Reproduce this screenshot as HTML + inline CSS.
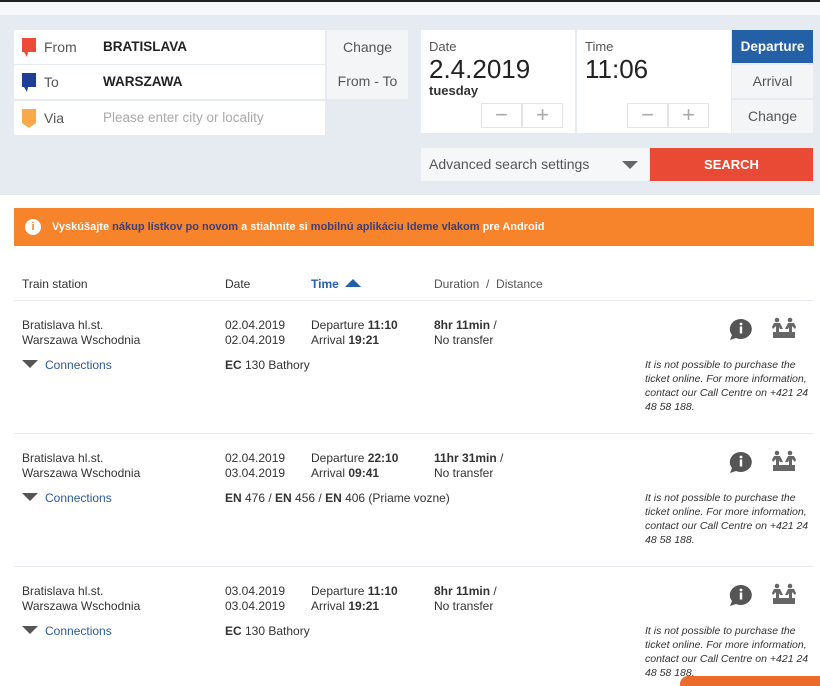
<!DOCTYPE html>
<html><head><meta charset="utf-8"><style>
*{margin:0;padding:0;box-sizing:border-box}
body{width:820px;height:682px;overflow:hidden;background:#fff;font-family:"Liberation Sans",sans-serif;color:#333;position:relative}
.a{position:absolute}
.top{left:0;top:0;width:820px;height:2px;background:#222}
.strip{left:0;top:2px;width:820px;height:13px;background:#f6f7f9}
.bg{left:0;top:15px;width:820px;height:180px;background:#e6ebf2}
.inp{background:#fff;left:14px;width:311px;height:34px;font-size:14px}
.inp .l{position:absolute;left:30px;top:9px;color:#555}
.inp .v{position:absolute;left:89px;top:9px;font-weight:bold;color:#222;font-size:13.5px}
.flag{position:absolute;left:8px;top:8px;width:14px;height:19px}
.grey{background:#f4f5f7;color:#555;font-size:14px;text-align:center}
.box{background:#fff;top:30px;height:103px;width:154px}
.small{font-size:13px;color:#555}
.pm{position:absolute;top:73px;width:41px;height:25px;border:1px solid #e4e4e4;color:#aaa;font-size:22px;text-align:center;line-height:22px}
.s{font-size:12px;color:#333;line-height:15px}
.hr{left:14px;width:800px;height:1px;background:#e8ebef}
.note{font-size:10.5px;font-style:italic;line-height:14px;color:#333;left:645px;width:175px}
.tri{display:inline-block;width:0;height:0;border-left:8px solid transparent;border-right:8px solid transparent;border-top:8px solid #555;margin-right:7px;vertical-align:1px}
.conn{font-size:12px;color:#2d5a9c}
</style></head><body>
<div class="a top"></div><div class="a strip"></div><div class="a bg"></div>

<div class="a inp" style="top:30px"><svg class="flag" viewBox="0 0 14 19"><path d="M0 0H14V14H6L5 19L2 14H0Z" fill="#ee4a3a"/></svg><span class="l">From</span><span class="v">BRATISLAVA</span></div>
<div class="a inp" style="top:65px"><svg class="flag" viewBox="0 0 14 19"><path d="M0 0H14V14H6L5 19L2 14H0Z" fill="#1f3f94"/></svg><span class="l">To</span><span class="v">WARSZAWA</span></div>
<div class="a inp" style="top:101px"><svg class="flag" viewBox="0 0 14 19"><path d="M0 0H14V14L7 19L0 14Z" fill="#f9a94a"/></svg><span class="l">Via</span><span class="v" style="font-weight:normal;color:#aaa">Please enter city or locality</span></div>
<div class="a grey" style="left:327px;top:30px;width:81px;height:69px;line-height:34px">Change<br>From - To</div>

<div class="a box" style="left:421px"><div class="a small" style="left:8px;top:9px">Date</div><div class="a" style="left:8px;top:24px;font-size:26px;color:#222">2.4.2019</div><div class="a" style="left:8px;top:53px;font-size:13px;font-weight:bold;color:#333">tuesday</div><div class="pm" style="left:60px">−</div><div class="pm" style="left:101px">+</div></div>
<div class="a box" style="left:577px"><div class="a small" style="left:8px;top:9px">Time</div><div class="a" style="left:8px;top:24px;font-size:26px;color:#222">11:06</div><div class="pm" style="left:50px">−</div><div class="pm" style="left:91px">+</div></div>
<div class="a" style="left:732px;top:30px;width:81px;height:33px;background:#2360a5;color:#fff;font-weight:bold;font-size:13.5px;text-align:center;line-height:33px">Departure</div>
<div class="a grey" style="left:732px;top:65px;width:81px;height:33px;line-height:33px">Arrival</div>
<div class="a grey" style="left:732px;top:100px;width:81px;height:33px;line-height:33px">Change</div>

<div class="a" style="left:421px;top:148px;width:228px;height:33px;background:#f6f7f9;font-size:14px;color:#555;line-height:33px;padding-left:8px">Advanced search settings<span style="position:absolute;left:201px;top:13px;border-left:8px solid transparent;border-right:8px solid transparent;border-top:8px solid #666"></span></div>
<div class="a" style="left:650px;top:148px;width:163px;height:33px;background:#e84a35;color:#fff;font-weight:bold;font-size:13px;text-align:center;line-height:33px">SEARCH</div>

<div class="a" style="left:14px;top:208px;width:800px;height:38px;background:#f7832a;font-size:11px;font-weight:bold;color:#fff;line-height:38px;padding-left:38px">
<span style="position:absolute;left:11px;top:11px;width:16px;height:16px;border-radius:50%;background:#fff;color:#f7832a;text-align:center;line-height:16px;font-size:11px">i</span>
Vyskúšajte <span style="color:#3a3f7a">nákup lístkov po novom</span> a stiahnite si <span style="color:#3a3f7a">mobilnú aplikáciu Ideme vlakom</span> pre Android</div>

<div class="a s" style="left:22px;top:277px">Train station</div>
<div class="a s" style="left:225px;top:277px">Date</div>
<div class="a s" style="left:311px;top:277px;color:#2360a5;font-weight:bold">Time <span style="display:inline-block;border-left:8px solid transparent;border-right:8px solid transparent;border-bottom:8px solid #2360a5;vertical-align:1px;margin-left:3px"></span></div>
<div class="a s" style="left:434px;top:277px;color:#555">Duration &nbsp;/ &nbsp;Distance</div>
<div class="a hr" style="top:300px"></div>
<div class="a hr" style="top:433px"></div>
<div class="a hr" style="top:566px"></div>

<div class="a s" style="left:22px;top:318px">Bratislava hl.st.<br>Warszawa Wschodnia</div>
<div class="a s" style="left:225px;top:318px">02.04.2019<br>02.04.2019</div>
<div class="a s" style="left:311px;top:318px">Departure <b>11:10</b><br>Arrival <b>19:21</b></div>
<div class="a s" style="left:434px;top:318px"><b>8hr 11min</b> /<br>No transfer</div>
<div class="a conn" style="left:22px;top:358px"><span class="tri"></span>Connections</div>
<div class="a s" style="left:225px;top:358px"><b>EC</b> 130 Bathory</div>
<div class="a note" style="top:358px">It is not possible to purchase the ticket online. For more information, contact our Call Centre on +421 24 48 58 188.</div>

<div class="a s" style="left:22px;top:451px">Bratislava hl.st.<br>Warszawa Wschodnia</div>
<div class="a s" style="left:225px;top:451px">02.04.2019<br>03.04.2019</div>
<div class="a s" style="left:311px;top:451px">Departure <b>22:10</b><br>Arrival <b>09:41</b></div>
<div class="a s" style="left:434px;top:451px"><b>11hr 31min</b> /<br>No transfer</div>
<div class="a conn" style="left:22px;top:491px"><span class="tri"></span>Connections</div>
<div class="a s" style="left:225px;top:491px"><b>EN</b> 476 / <b>EN</b> 456 / <b>EN</b> 406 (Priame vozne)</div>
<div class="a note" style="top:491px">It is not possible to purchase the ticket online. For more information, contact our Call Centre on +421 24 48 58 188.</div>

<div class="a s" style="left:22px;top:584px">Bratislava hl.st.<br>Warszawa Wschodnia</div>
<div class="a s" style="left:225px;top:584px">03.04.2019<br>03.04.2019</div>
<div class="a s" style="left:311px;top:584px">Departure <b>11:10</b><br>Arrival <b>19:21</b></div>
<div class="a s" style="left:434px;top:584px"><b>8hr 11min</b> /<br>No transfer</div>
<div class="a conn" style="left:22px;top:624px"><span class="tri"></span>Connections</div>
<div class="a s" style="left:225px;top:624px"><b>EC</b> 130 Bathory</div>
<div class="a note" style="top:624px">It is not possible to purchase the ticket online. For more information, contact our Call Centre on +421 24 48 58 188.</div>

<svg class="a" style="left:728px;top:318px" width="26" height="22" viewBox="0 0 26 22"><path d="M13 1a11 10 0 1 1-5 19l-6 2 2-5A11 10 0 0 1 13 1z" fill="#555"/><circle cx="13" cy="6" r="1.4" fill="#fff"/><rect x="11.8" y="8.5" width="2.4" height="7" fill="#fff"/></svg>
<svg class="a" style="left:771px;top:317px" width="26" height="22" viewBox="0 0 26 22" fill="#666"><circle cx="6" cy="3" r="2.3"/><circle cx="19" cy="3" r="2.3"/><path d="M3 6h6l3 6h-3l-1-2v5h5v6H2v-6h3V9L2 12 1 10z"/><path d="M23 6h-6l-3 6h3l1-2v5h-5v6h11v-6h-3V9l3 3 1-2z"/></svg>
<svg class="a" style="left:728px;top:451px" width="26" height="22" viewBox="0 0 26 22"><path d="M13 1a11 10 0 1 1-5 19l-6 2 2-5A11 10 0 0 1 13 1z" fill="#555"/><circle cx="13" cy="6" r="1.4" fill="#fff"/><rect x="11.8" y="8.5" width="2.4" height="7" fill="#fff"/></svg>
<svg class="a" style="left:771px;top:450px" width="26" height="22" viewBox="0 0 26 22" fill="#666"><circle cx="6" cy="3" r="2.3"/><circle cx="19" cy="3" r="2.3"/><path d="M3 6h6l3 6h-3l-1-2v5h5v6H2v-6h3V9L2 12 1 10z"/><path d="M23 6h-6l-3 6h3l1-2v5h-5v6h11v-6h-3V9l3 3 1-2z"/></svg>
<svg class="a" style="left:728px;top:584px" width="26" height="22" viewBox="0 0 26 22"><path d="M13 1a11 10 0 1 1-5 19l-6 2 2-5A11 10 0 0 1 13 1z" fill="#555"/><circle cx="13" cy="6" r="1.4" fill="#fff"/><rect x="11.8" y="8.5" width="2.4" height="7" fill="#fff"/></svg>
<svg class="a" style="left:771px;top:583px" width="26" height="22" viewBox="0 0 26 22" fill="#666"><circle cx="6" cy="3" r="2.3"/><circle cx="19" cy="3" r="2.3"/><path d="M3 6h6l3 6h-3l-1-2v5h5v6H2v-6h3V9L2 12 1 10z"/><path d="M23 6h-6l-3 6h3l1-2v5h-5v6h11v-6h-3V9l3 3 1-2z"/></svg>

<div class="a" style="left:680px;top:676px;width:140px;height:10px;background:#ec6a2a;border-radius:8px 0 0 0"></div>
</body></html>
